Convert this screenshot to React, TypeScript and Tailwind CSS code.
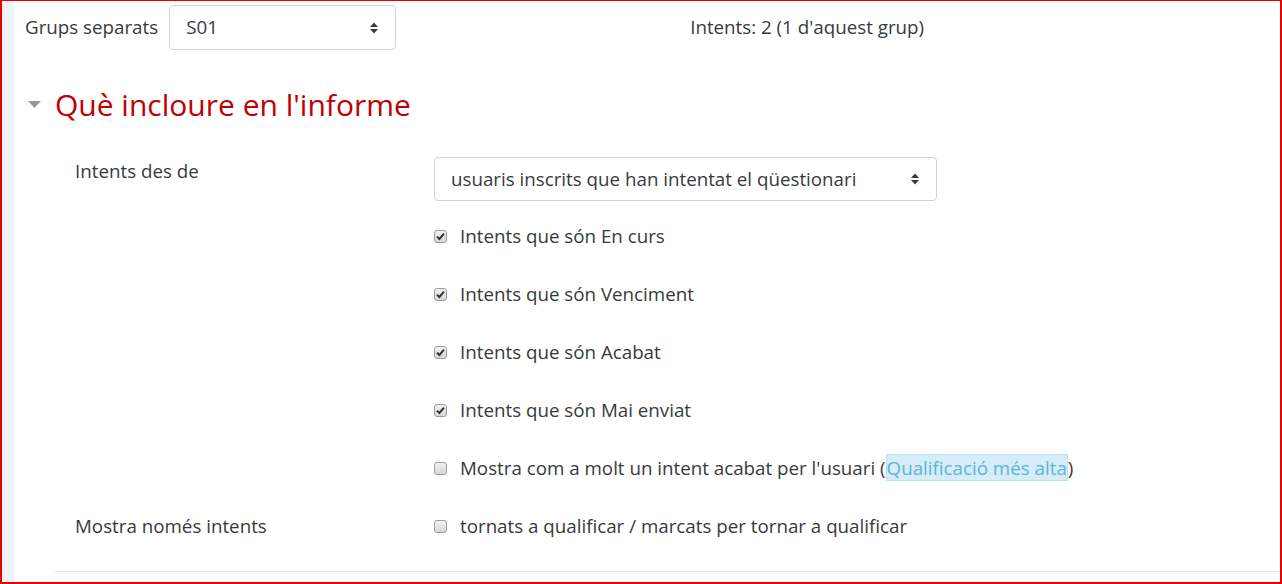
import React from "react"

// Report options form: group selector + "what to include" section

function SelectArrows() {
  return (
    <svg width="10" height="14" viewBox="0 0 10 14" className="text-[#373a3c]">
      <path d="M1 6 L5 1.5 L9 6 Z" fill="currentColor" />
      <path d="M1 8 L5 12.5 L9 8 Z" fill="currentColor" />
    </svg>
  )
}

function Select({ value, className }: { value: string; className: string }) {
  return (
    <div
      className={`flex items-center justify-between rounded-[4px] border border-[#ced4da] bg-white pl-[16px] pr-[16px] ${className}`}
    >
      <span>{value}</span>
      <SelectArrows />
    </div>
  )
}

function Checkbox({ checked }: { checked: boolean }) {
  return (
    <span className="flex h-[13px] w-[13px] shrink-0 items-center justify-center rounded-[3px] border border-[#9b9b9b] bg-gradient-to-b from-[#f2f2f2] to-[#d6d6d6]">
      {checked && (
        <svg width="9" height="9" viewBox="0 0 9 9">
          <path d="M1 4.6 L3.4 7 L8 1.6" fill="none" stroke="#333" strokeWidth="2" />
        </svg>
      )}
    </span>
  )
}

function CheckRow({ checked, children }: { checked: boolean; children: React.ReactNode }) {
  return (
    <div className="flex h-[58px] items-center gap-[13px]">
      <Checkbox checked={checked} />
      <span>{children}</span>
    </div>
  )
}

export default function App() {
  const states = ["En curs", "Venciment", "Acabat", "Mai enviat"]
  return (
    <div
      className="flex h-[584px] w-[1282px] overflow-hidden border-t border-r-2 border-b-2 border-l-2 border-[#ee0000] text-[18.75px] text-[#373a3c]"
      style={{ fontFamily: '"Open Sans", "Noto Sans", sans-serif' }}
    >
      <div className="w-[12px] shrink-0 bg-[#eff3f7]" />
      <div className="flex flex-1 flex-col bg-white">
        <div className="flex items-center pt-[4px] pl-[11px]">
          <span>Grups separats</span>
          <Select value="S01" className="ml-[11px] h-[45px] w-[227px]" />
          <span className="ml-[294px]">Intents: 2 (1 d'aquest grup)</span>
        </div>

        <div className="mt-[37px] flex items-center pl-[14px]">
          <svg width="13" height="8" viewBox="0 0 13 8">
            <path d="M0 0 L13 0 L6.5 7 Z" fill="#999" />
          </svg>
          <h2 className="ml-[14px] text-[30px] leading-[36px] text-[#c00000]">Què incloure en l'informe</h2>
        </div>

        <div className="mt-[34px] flex pl-[61px]">
          <div className="w-[359px]">Intents des de</div>
          <div className="flex flex-col">
            <Select value="usuaris inscrits que han intentat el qüestionari" className="h-[44px] w-[503px]" />
            <div className="mt-[6px]">
              {states.map((s) => (
                <CheckRow key={s} checked>
                  Intents que són {s}
                </CheckRow>
              ))}
              <CheckRow checked={false}>
                Mostra com a molt un intent acabat per l'usuari (
                <span className="border border-[#b7e1f1] bg-[#d6edf7] text-[#5bb4dc]">Qualificació més alta</span>)
              </CheckRow>
            </div>
          </div>
        </div>

        <div className="flex h-[58px] items-center pl-[61px]">
          <div className="w-[359px]">Mostra només intents</div>
          <div className="flex items-center gap-[13px]">
            <Checkbox checked={false} />
            <span>tornats a qualificar / marcats per tornar a qualificar</span>
          </div>
        </div>

        <div className="mt-[16px] ml-[41px] border-t border-[#dee2e6]" />
      </div>
    </div>
  )
}
